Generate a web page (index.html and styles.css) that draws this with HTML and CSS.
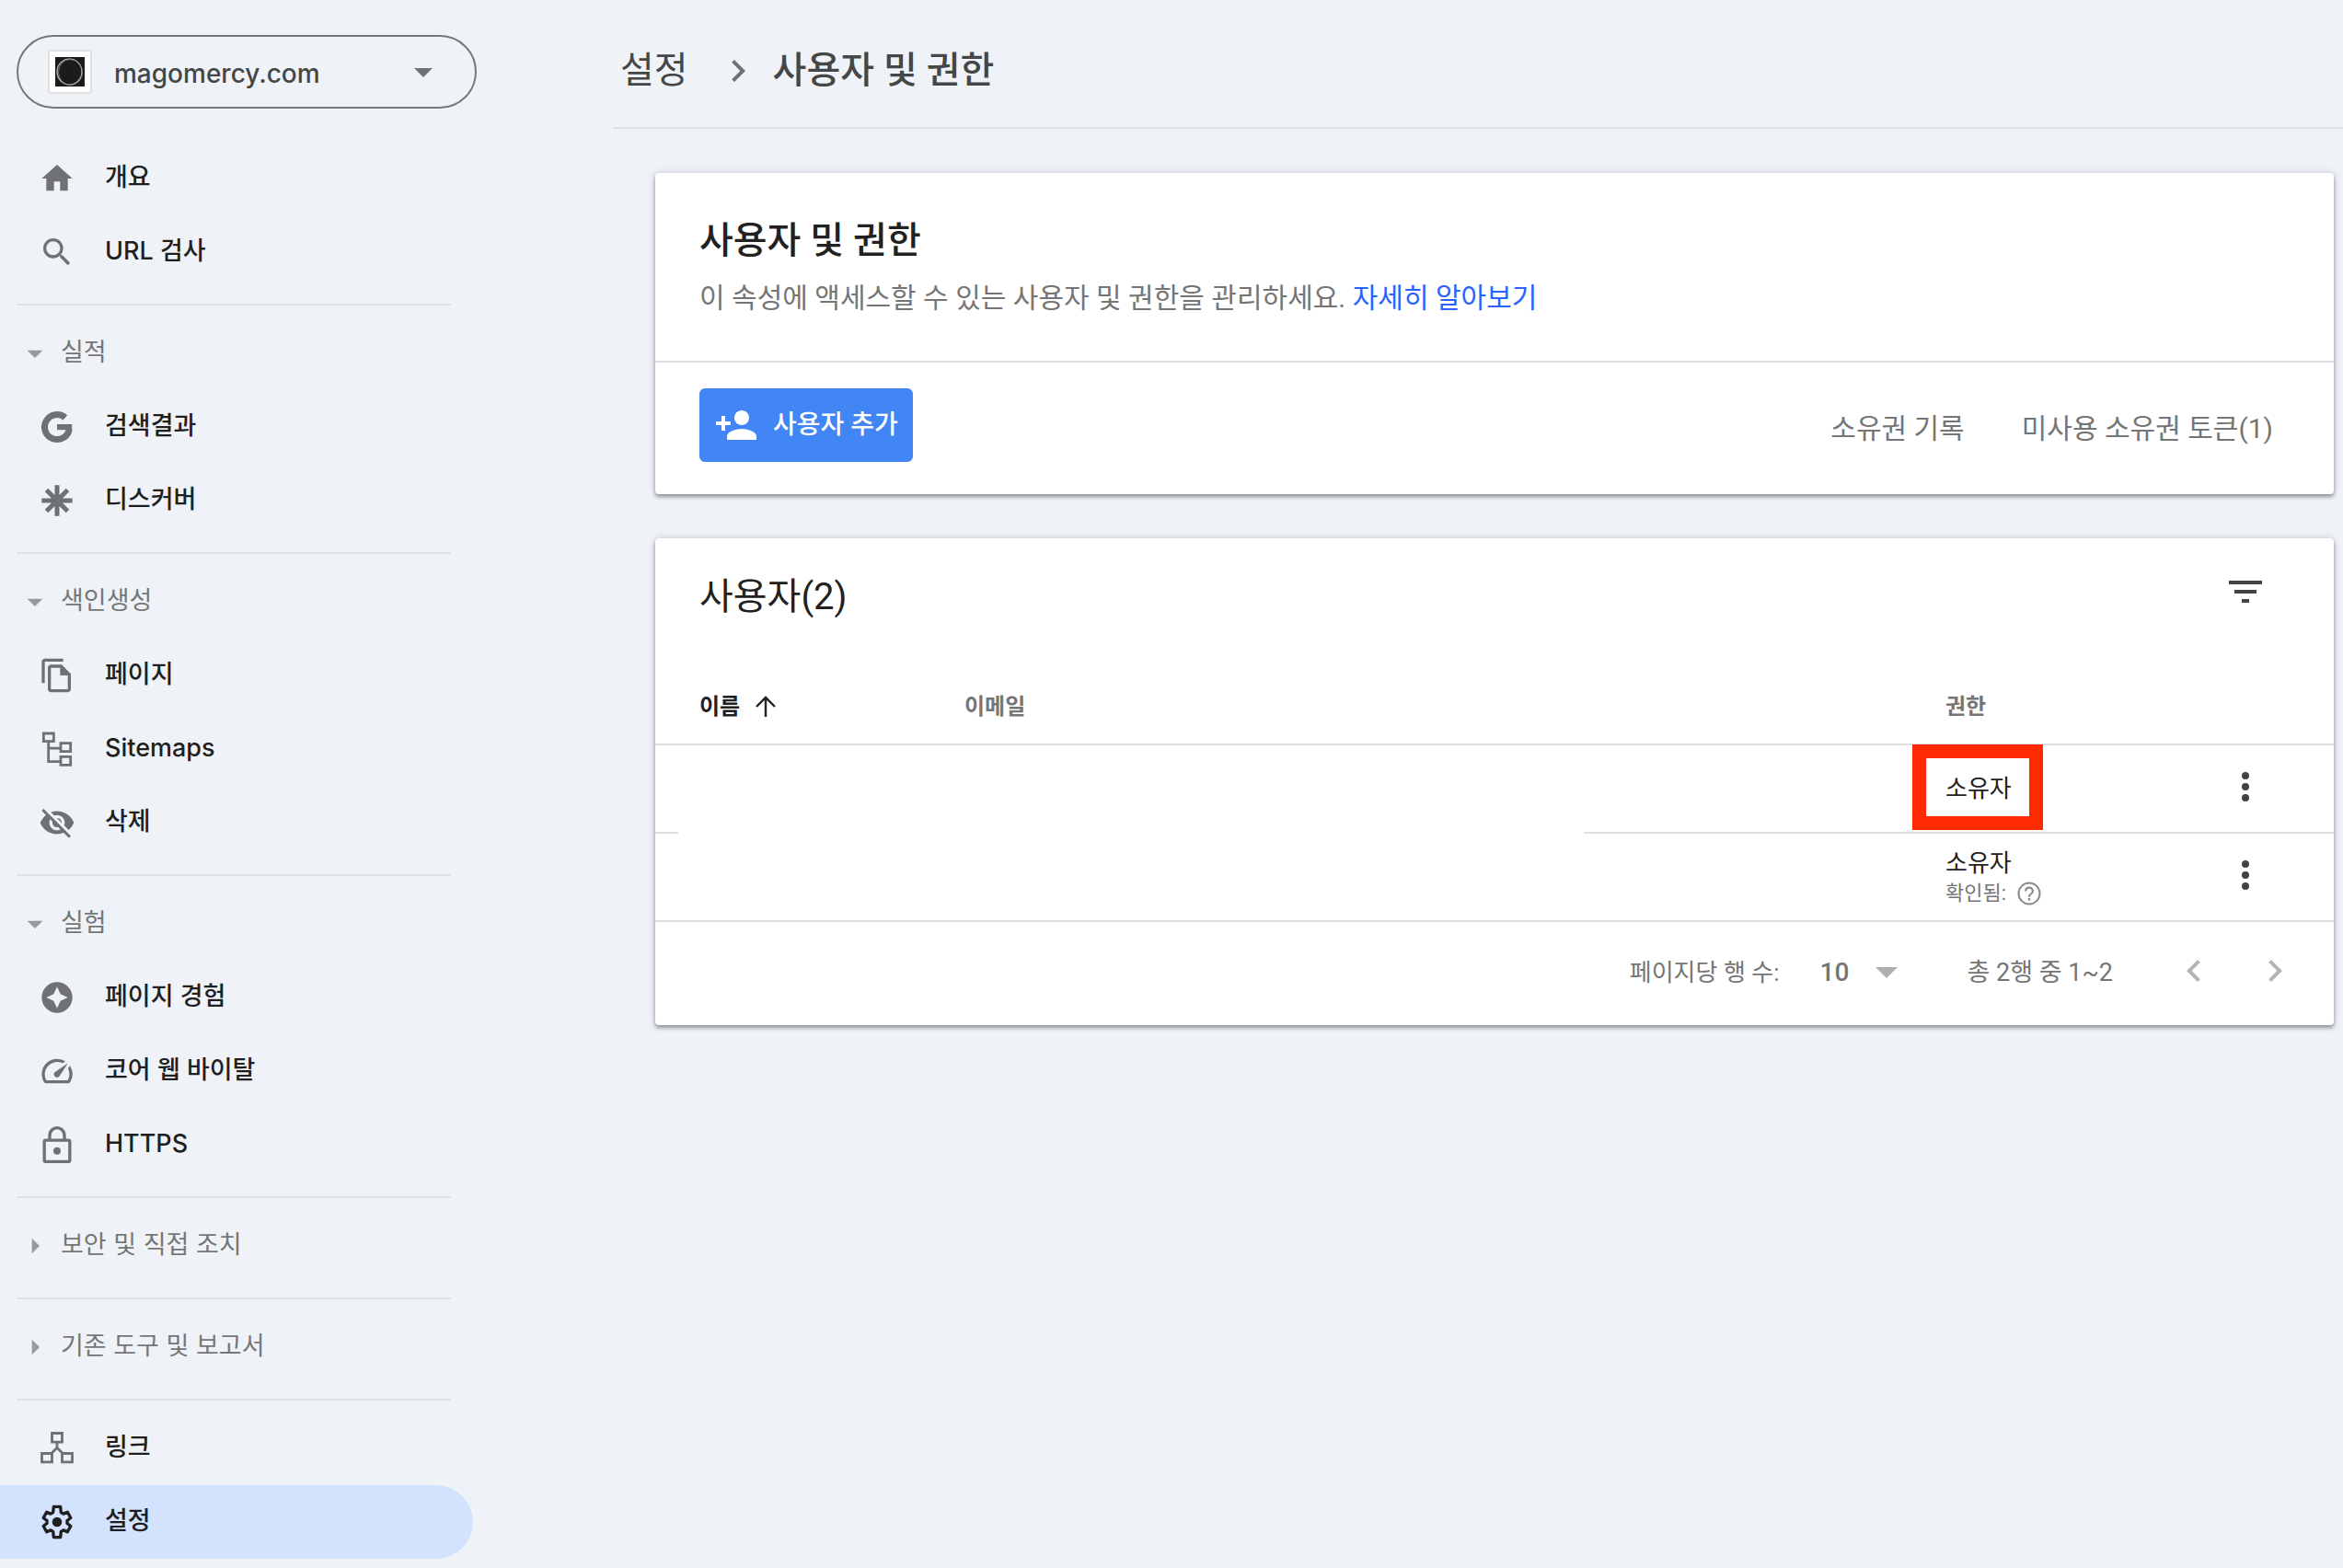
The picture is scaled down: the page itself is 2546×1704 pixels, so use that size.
FILE: index.html
```
<!DOCTYPE html>
<html lang="ko">
<head>
<meta charset="utf-8">
<title>사용자 및 권한</title>
<link rel="stylesheet" href="styles.css">
</head>
<body>
<div class="app">
  <aside class="sidebar">
    <button class="property" type="button">
      <span class="favicon"><svg viewBox="0 0 32 32" width="32" height="32"><rect width="32" height="32" fill="#1b1b1b"/><ellipse cx="15.5" cy="16" rx="13.5" ry="14" fill="none" stroke="#c4c4c4" stroke-width="1.2"/><ellipse cx="16.5" cy="16.5" rx="13" ry="14" fill="none" stroke="#8a8a8a" stroke-width=".8"/></svg></span>
      <span class="property-name">magomercy.com</span>
      <svg class="icon-lg" viewBox="0 0 24 24"><path d="M7 10l5 5 5-5z"/></svg>
    </button>
    <nav class="nav">
      <div class="group">
        <a class="item" href="#"><svg class="icon" viewBox="0 0 24 24"><path d="M10 20v-6h4v6h5v-8h3L12 3 2 12h3v8z"/></svg><span class="label">개요</span></a>
        <a class="item" href="#"><svg class="icon" viewBox="0 0 24 24"><path d="M15.5 14h-.79l-.28-.27A6.47 6.47 0 0 0 16 9.500 6.500 6.500 0 1 0 9.500 16c1.610 0 3.090-.59 4.230-1.570l.27.28v.79l5 4.990L20.490 19l-4.990-5zm-6 0C7.010 14 5 11.990 5 9.500S7.010 5 9.500 5 14 7.010 14 9.500 11.990 14 9.500 14z"/></svg><span class="label">URL 검사</span></a>
      </div>
      <div class="group">
        <button class="section" type="button"><svg class="icon" viewBox="0 0 24 24"><path d="M7 10l5 5 5-5z"/></svg><span class="label">실적</span></button>
        <a class="item" href="#"><svg class="icon" viewBox="0 0 24 24"><path d="M17.300 5.900A8.100 8.100 0 1 0 19.980 13.400" fill="none" stroke="currentColor" stroke-width="4.200"/><path d="M12 10.200h9.700v3.700H12z"/></svg><span class="label">검색결과</span></a>
        <a class="item" href="#"><svg class="icon" viewBox="0 0 24 24"><path d="M12 1.900v20.200M2 12h20M5.100 5.100l13.800 13.800M18.900 5.100L5.100 18.900" stroke="currentColor" stroke-width="3"/></svg><span class="label">디스커버</span></a>
      </div>
      <div class="group">
        <button class="section" type="button"><svg class="icon" viewBox="0 0 24 24"><path d="M7 10l5 5 5-5z"/></svg><span class="label">색인생성</span></button>
        <a class="item" href="#"><svg class="icon" viewBox="0 0 24 24"><path fill-rule="evenodd" d="M16 1H4c-1.100 0-2 .9-2 2v14h2V3h12zM15 5l6 6v10c0 1.100-.9 2-2 2H8c-1.100 0-2-.9-2-2V7c0-1.100.9-2 2-2zM8 7v14h11v-9h-5V7z"/></svg><span class="label">페이지</span></a>
        <a class="item" href="#"><svg class="icon" viewBox="0 0 24 24"><path d="M3.200 1.800h6.600V7H3.200zM14.400 8.200h6.400v5.400h-6.400zM14.400 17h6.400v5.400h-6.400zM6.400 7v13.200h8M6.400 11.500h8" fill="none" stroke="currentColor" stroke-width="1.700"/></svg><span class="label">Sitemaps</span></a>
        <a class="item" href="#"><svg class="icon" viewBox="0 0 24 24"><path d="M12 7c2.760 0 5 2.240 5 5 0 .65-.13 1.260-.36 1.830l2.920 2.920c1.510-1.260 2.700-2.890 3.430-4.750-1.730-4.390-6-7.500-11-7.500-1.400 0-2.740.25-3.980.7l2.160 2.160C10.740 7.130 11.350 7 12 7zM2 4.270l2.280 2.280.46.46A11.800 11.800 0 0 0 1 12c1.730 4.390 6 7.500 11 7.500 1.550 0 3.030-.3 4.380-.84l.42.42L19.730 22 21 20.730 3.270 3 2 4.270zM7.530 9.800l1.550 1.550c-.05.21-.08.43-.08.65 0 1.660 1.340 3 3 3 .22 0 .44-.03.65-.08l1.550 1.550c-.67.33-1.410.53-2.200.53-2.760 0-5-2.240-5-5 0-.79.2-1.530.53-2.200zm4.310-.78l3.150 3.150.02-.16c0-1.660-1.340-3-3-3l-.17.01z"/></svg><span class="label">삭제</span></a>
      </div>
      <div class="group">
        <button class="section" type="button"><svg class="icon" viewBox="0 0 24 24"><path d="M7 10l5 5 5-5z"/></svg><span class="label">실험</span></button>
        <a class="item" href="#"><svg class="icon" viewBox="0 0 24 24"><path fill-rule="evenodd" d="M12 2a10 10 0 1 0 0 20 10 10 0 0 0 0-20zM12 5l2.200 4.800L19 12l-4.800 2.200L12 19l-2.200-4.800L5 12l4.800-2.200z"/></svg><span class="label">페이지 경험</span></a>
        <a class="item" href="#"><svg class="icon" viewBox="0 0 24 24"><path d="M20.380 8.570l-1.230 1.850a8 8 0 0 1-.22 7.580H5.070A8 8 0 0 1 15.580 6.850l1.850-1.230A10 10 0 0 0 3.350 19a2 2 0 0 0 1.720 1h13.850a2 2 0 0 0 1.740-1 10 10 0 0 0-.27-10.440zm-9.790 6.840a2 2 0 0 0 2.830 0l5.660-8.490-8.490 5.660a2 2 0 0 0 0 2.830z"/></svg><span class="label">코어 웹 바이탈</span></a>
        <a class="item" href="#"><svg class="icon" viewBox="0 0 24 24"><rect x="3.700" y="9.100" width="16.600" height="13.900" rx="1" fill="none" stroke="currentColor" stroke-width="2"/><path d="M7.200 9V5.800a4.800 4.800 0 0 1 9.600 0V9" fill="none" stroke="currentColor" stroke-width="2"/><circle cx="12" cy="16" r="2.400"/></svg><span class="label">HTTPS</span></a>
      </div>
      <div class="group">
        <button class="section" type="button"><svg class="icon" viewBox="0 0 24 24"><path d="M10 17l5-5-5-5z"/></svg><span class="label">보안 및 직접 조치</span></button>
      </div>
      <div class="group">
        <button class="section" type="button"><svg class="icon" viewBox="0 0 24 24"><path d="M10 17l5-5-5-5z"/></svg><span class="label">기존 도구 및 보고서</span></button>
      </div>
      <div class="group">
        <a class="item" href="#"><svg class="icon" viewBox="0 0 24 24"><path d="M8.700 2.100h6.600v5.800H8.700zM2.100 15.300h6.600v5.600H2.100zM15.300 15.300h6.600v5.600h-6.600zM12 7.900v4.300M8 15.600l4-4 4 4" fill="none" stroke="currentColor" stroke-width="1.700"/></svg><span class="label">링크</span></a>
        <a class="item active" href="#" aria-current="page"><svg class="icon" viewBox="0 0 24 24"><path fill="none" stroke="currentColor" stroke-width="2" stroke-linejoin="round" d="M18.600 12.900v-1.800l2.300-1.800-2.100-3.700-2.700 1.100-1.500-.9L14.200 2H9.800l-.4 3.800-1.500.9-2.700-1.100-2.100 3.700 2.300 1.800v1.800l-2.300 1.800 2.100 3.700 2.700-1.100 1.500.9.4 3.800h4.400l.4-3.800 1.500-.9 2.700 1.100 2.100-3.700z"/><circle cx="12" cy="12" r="3.200"/></svg><span class="label">설정</span></a>
      </div>
    </nav>
  </aside>

  <main class="main">
    <header class="breadcrumb">
      <a class="crumb" href="#">설정</a>
      <svg class="icon-lg" viewBox="0 0 24 24"><path d="M8.590 16.590L13.170 12 8.590 7.410 10 6l6 6-6 6z"/></svg>
      <span class="crumb current">사용자 및 권한</span>
    </header>
    <div class="cards">
      <section class="card">
        <div class="intro">
          <h1>사용자 및 권한</h1>
          <p>이 속성에 액세스할 수 있는 사용자 및 권한을 관리하세요. <a href="#">자세히 알아보기</a></p>
        </div>
        <div class="actions">
          <button class="add" type="button"><svg class="icon-lg" viewBox="0 0 24 24"><path d="M15 12c2.210 0 4-1.790 4-4s-1.790-4-4-4-4 1.790-4 4 1.790 4 4 4zm-9-2V7H4v3H1v2h3v3h2v-3h3v-2H6zm9 4c-2.670 0-8 1.340-8 4v2h16v-2c0-2.660-5.330-4-8-4z"/></svg>사용자 추가</button>
          <div class="links"><a href="#">소유권 기록</a><a href="#">미사용 소유권 토큰(1)</a></div>
        </div>
      </section>

      <section class="card">
        <div class="table-title">
          <h2>사용자(2)</h2>
          <button class="plain" type="button" aria-label="필터"><svg class="icon-lg" viewBox="0 0 24 24"><path d="M10 18h4v-2h-4zM3 6v2h18V6zm3 7h12v-2H6z"/></svg></button>
        </div>
        <table>
          <colgroup><col class="col-name"><col><col class="col-role"><col class="col-menu"></colgroup>
          <thead>
            <tr>
              <th class="sorted"><span class="sort">이름 <svg viewBox="0 0 24 24" width="24" height="24"><path d="M12 23V2M2 12L12 2l10 10" fill="none" stroke="currentColor" stroke-width="2.400"/></svg></span></th>
              <th>이메일</th>
              <th>권한</th>
              <th></th>
            </tr>
          </thead>
          <tbody>
            <tr class="masked">
              <td colspan="2"><span class="mask"></span></td>
              <td><div class="role highlighted">소유자</div></td>
              <td class="menu"><button class="plain" type="button" aria-label="더보기"><svg class="icon-lg" viewBox="0 0 24 24"><path d="M12 8a2 2 0 1 0 0-4 2 2 0 0 0 0 4zm0 2a2 2 0 1 0 0 4 2 2 0 0 0 0-4zm0 6a2 2 0 1 0 0 4 2 2 0 0 0 0-4z"/></svg></button></td>
            </tr>
            <tr>
              <td colspan="2"></td>
              <td>
                <div class="role">소유자</div>
                <div class="verified">확인됨: <svg viewBox="0 0 24 24" width="30" height="30"><path d="M11 18h2v-2h-2zm1-16a10 10 0 1 0 0 20 10 10 0 0 0 0-20zm0 18.400a8.400 8.400 0 1 1 0-16.800 8.400 8.400 0 0 1 0 16.800zM12 6a4 4 0 0 0-4 4h1.700c0-1.300 1-2.300 2.300-2.300s2.300 1 2.300 2.300c0 2-3.150 1.750-3.150 5h1.700c0-2.250 3.150-2.500 3.150-5a4 4 0 0 0-4-4z"/></svg></div>
              </td>
              <td class="menu"><button class="plain" type="button" aria-label="더보기"><svg class="icon-lg" viewBox="0 0 24 24"><path d="M12 8a2 2 0 1 0 0-4 2 2 0 0 0 0 4zm0 2a2 2 0 1 0 0 4 2 2 0 0 0 0-4zm0 6a2 2 0 1 0 0 4 2 2 0 0 0 0-4z"/></svg></button></td>
            </tr>
          </tbody>
        </table>
        <footer class="pager">
          <label for="rows">페이지당 행 수:</label>
          <span class="select"><select id="rows"><option>10</option></select><svg viewBox="0 0 24 12" width="24" height="12"><path d="M0 0h24L12 12z"/></svg></span>
          <span class="range">총 2행 중 1~2</span>
          <div class="steps">
            <button class="plain" type="button" aria-label="이전"><svg class="icon-lg" viewBox="0 0 24 24"><path d="M15.410 7.410L14 6l-6 6 6 6 1.410-1.410L10.830 12z"/></svg></button>
            <button class="plain" type="button" aria-label="다음"><svg class="icon-lg" viewBox="0 0 24 24"><path d="M8.590 16.590L13.170 12 8.590 7.410 10 6l6 6-6 6z"/></svg></button>
          </div>
        </footer>
      </section>
    </div>
  </main>
</div>
</body>
</html>
```
FILE: styles.css
```
*, *::before, *::after { box-sizing: border-box; }
body {
  margin: 0;
  background: #eff3f8;
  color: #212121;
  font-family: Roboto, "Noto Sans CJK KR", sans-serif;
  line-height: 36px;
}
a { color: inherit; text-decoration: none; }
button, select { font: inherit; color: inherit; background: none; border: 0; padding: 0; margin: 0; }
svg { display: block; flex: none; fill: currentColor; }
h1, h2, p { margin: 0; font-weight: 400; }
.icon { width: 40px; height: 40px; }
.icon-lg { width: 48px; height: 48px; }
.plain { display: block; }

.app { display: grid; grid-template-columns: 666px minmax(0, 1fr); min-height: 100vh; }

/* Sidebar */
.sidebar { width: 518px; padding: 38px 0 10px; font-family: Inter, "Noto Sans CJK KR", sans-serif; }
.property {
  display: flex; align-items: center;
  width: 500px; height: 80px; margin: 0 0 36px 18px; padding: 0 32px;
  border: 2px solid #757779; border-radius: 40px;
  font-size: 28px; font-weight: 500; color: #444746; text-align: left;
}
.favicon {
  display: grid; place-items: center;
  width: 48px; height: 48px;
  background: #fff; border: 2px solid #e0e0e0; border-radius: 4px;
}
.property-name { flex: 1; margin-left: 24px; padding-top: 4px; }
.property .icon-lg { color: #6f7173; }
.group + .group { position: relative; padding-top: 14px; }
.group + .group::before {
  content: ""; position: absolute; top: 0; left: 18px; width: 472px; height: 2px; background: #e1e2e4;
}
.group { padding-bottom: 16px; }
.group:last-child { padding-bottom: 0; }
.item, .section { display: flex; align-items: center; width: 514px; height: 80px; font-size: 27px; }
.item { gap: 32px; padding-left: 42px; font-weight: 500; color: #1f1f1f; }
.item .icon { color: #6f7173; }
.section { gap: 8px; padding-left: 18px; color: #747775; }
.section .icon { color: #97999b; }
.label { padding-bottom: 2px; }
.item.active { background: #d3e3fd; border-radius: 0 40px 40px 0; }
.item.active .icon { color: #1f1f1f; }

/* Header */
.breadcrumb {
  display: flex; align-items: center; height: 140px; padding: 16px 8px 0;
  border-bottom: 2px solid #e0e0e0; color: #444746; font-size: 40px;
}
.breadcrumb .icon-lg { margin: 0 14px 0 30px; color: #6f7173; }
.crumb.current { font-weight: 500; }

/* Cards */
.cards { display: flex; flex-direction: column; gap: 48px; padding: 48px 10px 48px 46px; }
.card { background: #fff; border-radius: 4px; box-shadow: 0 3px 4px rgba(0, 0, 0, .35), 0 0 8px rgba(0, 0, 0, .16); }
.intro { height: 206px; padding: 46px 48px 0; border-bottom: 2px solid #dadce0; }
h1 { font-size: 40px; line-height: 56px; font-weight: 500; }
.intro p { margin-top: 12px; font-size: 30px; line-height: 44px; color: #757575; }
.intro p a { color: #2962ff; }
.actions { display: flex; align-items: flex-start; justify-content: space-between; padding: 28px 66px 27px 48px; }
.add {
  display: flex; align-items: center; gap: 16px; height: 80px; padding: 0 16px;
  background: #4285f4; border-radius: 6px; color: #fff; font-size: 28px; font-weight: 500;
}
.links { display: flex; gap: 62px; align-items: center; height: 88px; font-size: 30px; color: #757575; }

.table-title { display: flex; align-items: flex-start; justify-content: space-between; height: 142px; padding: 34px 72px 0 48px; color: #424242; }
h2 { font-size: 40px; line-height: 60px; color: #212121; }

table { width: 100%; table-layout: fixed; border-collapse: separate; border-spacing: 0; }
.col-name { width: 336px; }
.col-role { width: 254px; }
.col-menu { width: 168px; }
th, td { padding: 0; border-bottom: 2px solid #e0e0e0; text-align: left; }
th { height: 83px; font-size: 24px; font-weight: 700; color: #757575; }
th:first-child { padding-left: 48px; }
.sorted { color: #212121; }
.sort { display: flex; align-items: center; gap: 16px; }
td { height: 96px; }
.role { position: relative; font-size: 26px; }
.verified { display: flex; align-items: center; gap: 10px; height: 30px; font-size: 22px; color: #757575; }
.verified svg { color: #8a8a8a; }
.menu { padding: 0 0 4px 48px; color: #424242; }

/* Private data in the name and email columns is blanked out, with the rule under it */
.masked { position: relative; }
.mask { position: absolute; left: 25px; right: 815px; bottom: 0; height: 80px; background: #fff; }
/* Annotation frame round the role */
.highlighted::after {
  content: ""; position: absolute; left: -36px; top: -30px; width: 142px; height: 93px; border: 15px solid #ff2a04;
}

.pager { display: flex; align-items: center; justify-content: flex-end; height: 112px; padding: 0 40px 2px 48px; font-size: 26px; color: #757575; }
.select { display: flex; align-items: center; position: relative; width: 84px; margin: 0 76px 0 44px; }
.select select { width: 100%; appearance: none; font-size: 28px; font-weight: 500; }
.select svg { position: absolute; right: 0; color: #afafaf; pointer-events: none; }
.range { font-size: 27px; }
.steps { display: flex; gap: 40px; margin-left: 64px; padding-bottom: 4px; color: #b4b4b4; }
```
